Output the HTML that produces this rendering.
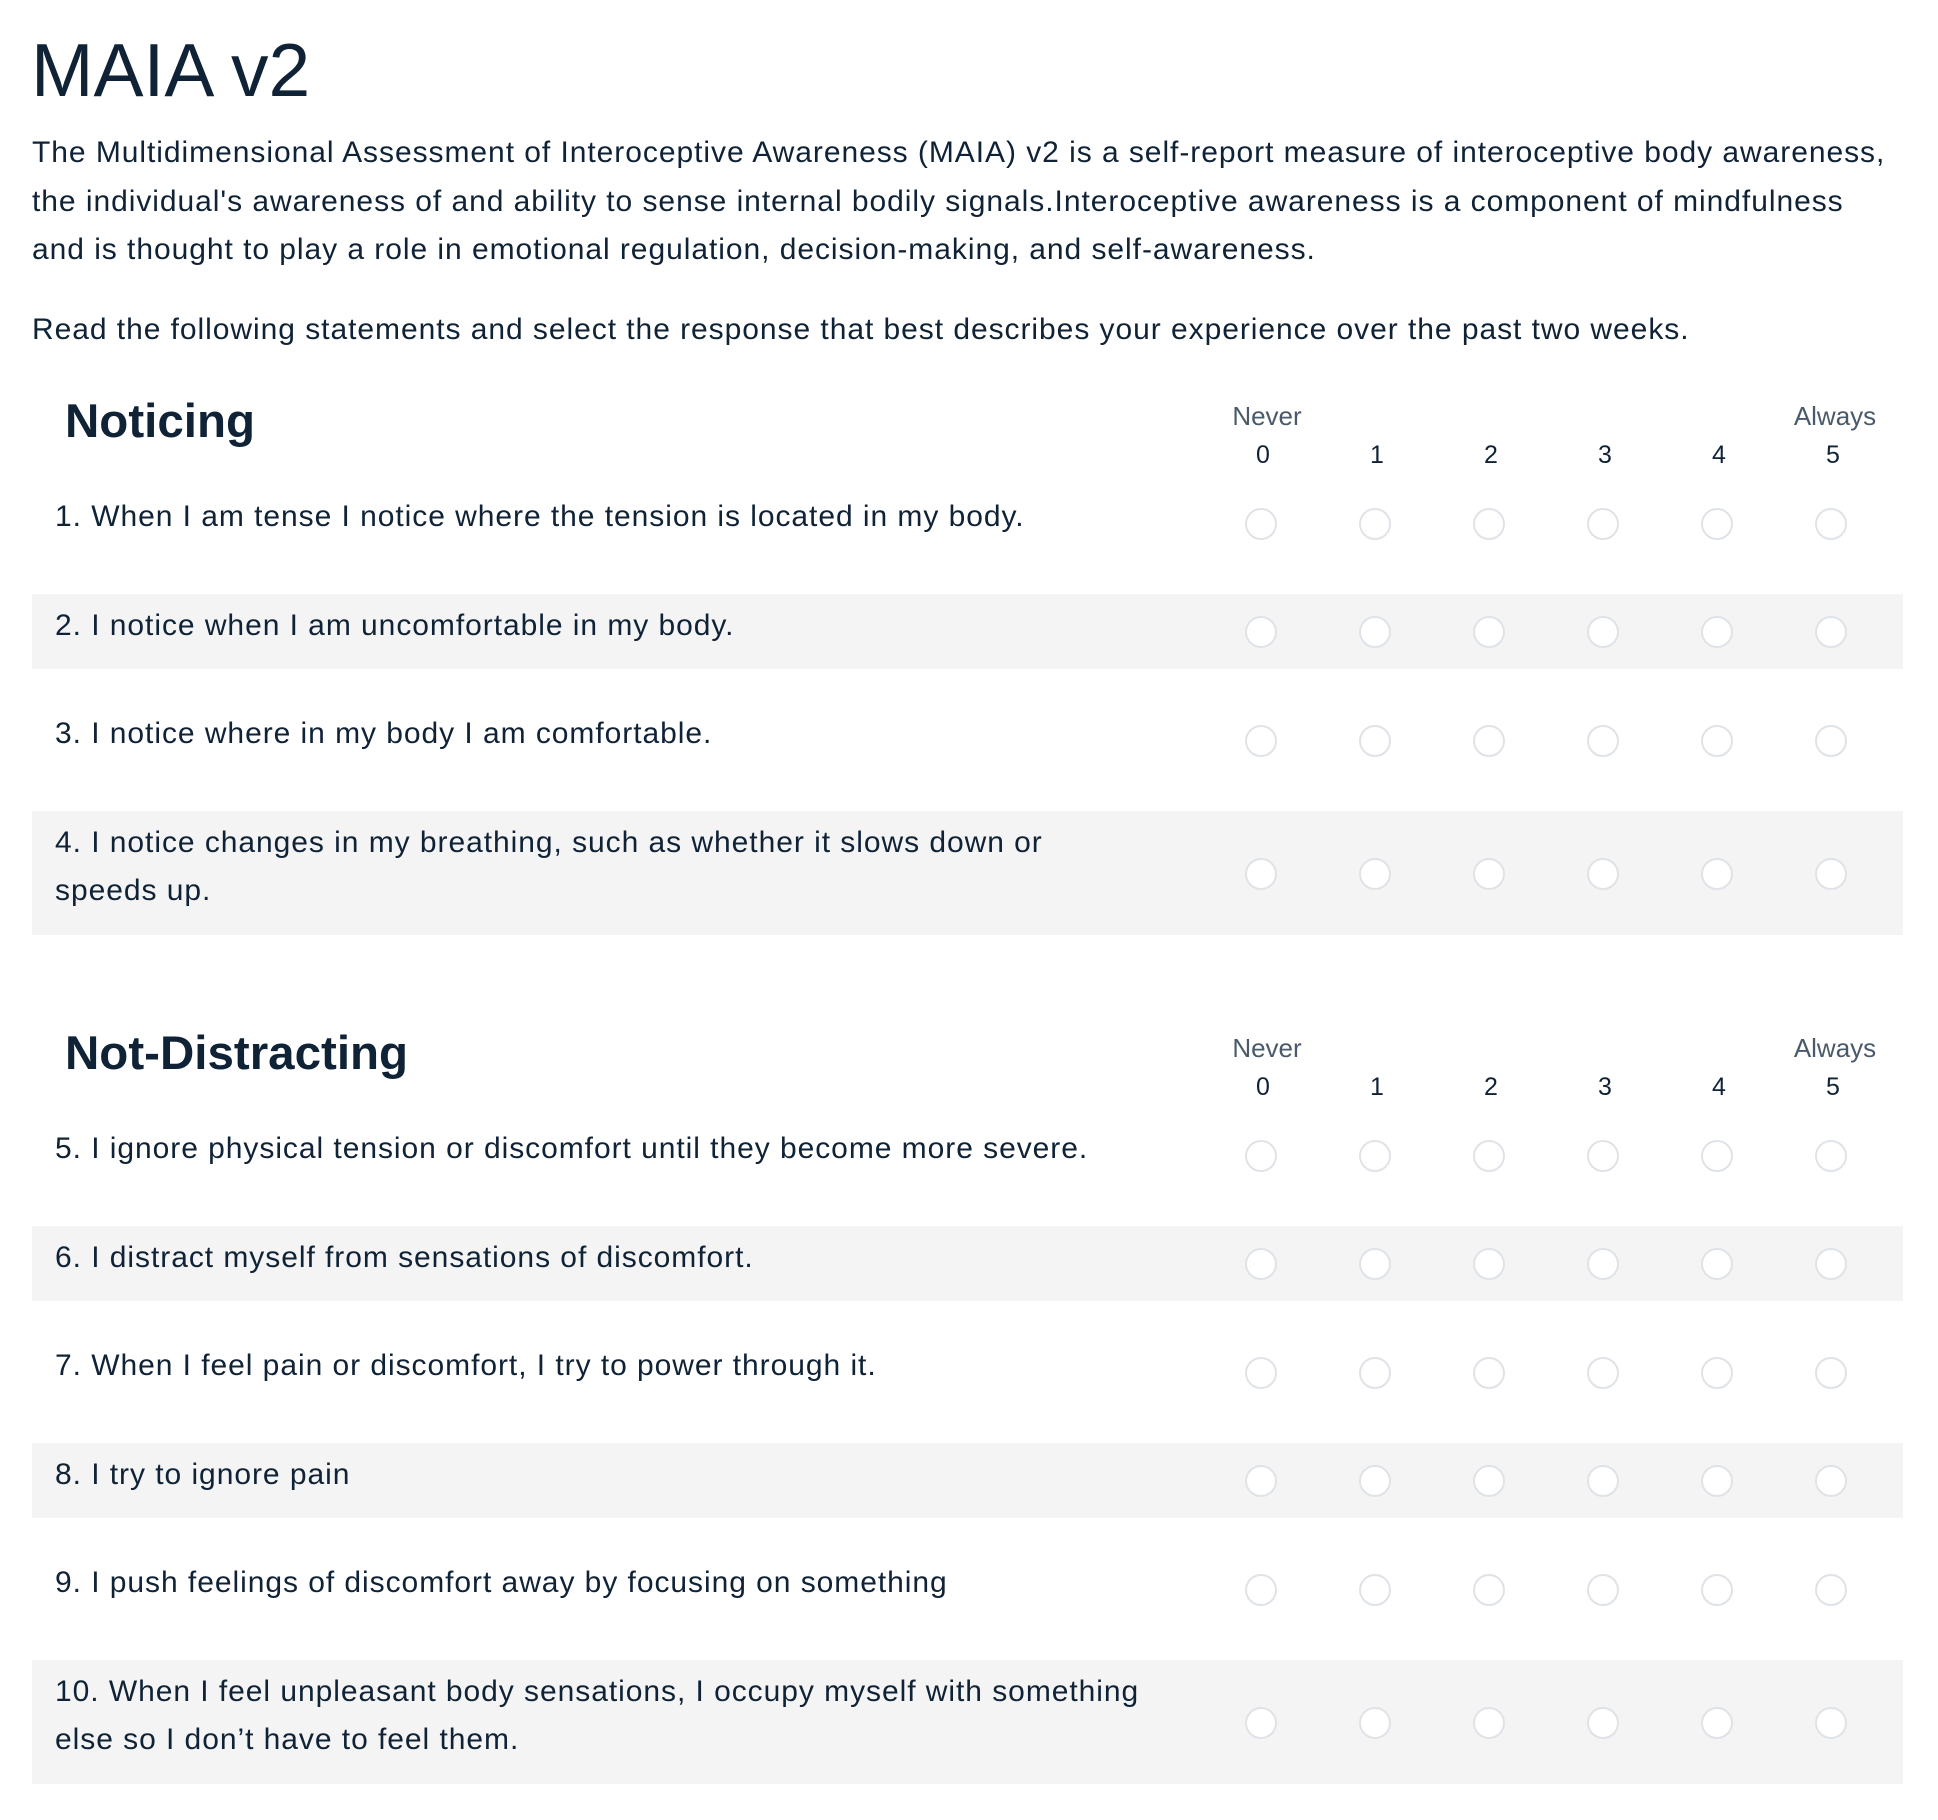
<!DOCTYPE html>
<html><head><meta charset="utf-8">
<style>
*{margin:0;padding:0;box-sizing:border-box}
html,body{width:1938px;height:1820px;background:#fff;overflow:hidden}
body{font-family:"Liberation Sans",Arial,Helvetica,sans-serif;color:#0f2236;position:relative}
h1{position:absolute;left:31px;top:33px;font-size:75px;font-weight:400;line-height:1;white-space:nowrap}
.p{position:absolute;left:32px;font-size:30px;letter-spacing:0.95px;line-height:48.5px;white-space:nowrap}
.sec{position:absolute;left:0;width:1938px}
.h2{position:absolute;left:65px;top:-87px;font-size:47.5px;font-weight:700;line-height:1;white-space:nowrap}
.lbl{position:absolute;font-size:26px;line-height:1;color:#4a5a6a;text-align:center;width:120px}
.num{position:absolute;top:-42px;font-size:25px;line-height:1;text-align:center;width:40px}
.row{position:relative;margin-left:32px;width:1871px;margin-bottom:33px;padding:8px 0 19px 23px;font-size:30px;letter-spacing:0.95px;line-height:48.5px;white-space:nowrap}
.row.g{background:#f4f4f4}
.r{position:absolute;top:50%;width:32px;height:32px;margin-top:-15px;border:2px solid #dfe3e8;border-radius:50%;background:#fff}
</style></head><body>
<h1>MAIA v2</h1>
<div class="p" style="top:129px">The Multidimensional Assessment of Interoceptive Awareness (MAIA) v2 is a self-report measure of interoceptive body awareness,<br>the individual's awareness of and ability to sense internal bodily signals.Interoceptive awareness is a component of mindfulness<br>and is thought to play a role in emotional regulation, decision-making, and self-awareness.</div>
<div class="p" style="top:306px">Read the following statements and select the response that best describes your experience over the past two weeks.</div>

<div class="sec" style="top:485px">
<div class="h2">Noticing</div>
<div class="lbl" style="left:1207px;top:-82px">Never</div>
<div class="lbl" style="left:1775px;top:-82px">Always</div>
<div class="num" style="left:1243px">0</div><div class="num" style="left:1357px">1</div><div class="num" style="left:1471px">2</div><div class="num" style="left:1585px">3</div><div class="num" style="left:1699px">4</div><div class="num" style="left:1813px">5</div>
<div class="row">1. When I am tense I notice where the tension is located in my body.<span class="r" style="left:1213px"></span><span class="r" style="left:1327px"></span><span class="r" style="left:1441px"></span><span class="r" style="left:1555px"></span><span class="r" style="left:1669px"></span><span class="r" style="left:1783px"></span></div>
<div class="row g">2. I notice when I am uncomfortable in my body.<span class="r" style="left:1213px"></span><span class="r" style="left:1327px"></span><span class="r" style="left:1441px"></span><span class="r" style="left:1555px"></span><span class="r" style="left:1669px"></span><span class="r" style="left:1783px"></span></div>
<div class="row">3. I notice where in my body I am comfortable.<span class="r" style="left:1213px"></span><span class="r" style="left:1327px"></span><span class="r" style="left:1441px"></span><span class="r" style="left:1555px"></span><span class="r" style="left:1669px"></span><span class="r" style="left:1783px"></span></div>
<div class="row g">4. I notice changes in my breathing, such as whether it slows down or<br>speeds up.<span class="r" style="left:1213px"></span><span class="r" style="left:1327px"></span><span class="r" style="left:1441px"></span><span class="r" style="left:1555px"></span><span class="r" style="left:1669px"></span><span class="r" style="left:1783px"></span></div>
</div>

<div class="sec" style="top:1117px">
<div class="h2">Not-Distracting</div>
<div class="lbl" style="left:1207px;top:-82px">Never</div>
<div class="lbl" style="left:1775px;top:-82px">Always</div>
<div class="num" style="left:1243px">0</div><div class="num" style="left:1357px">1</div><div class="num" style="left:1471px">2</div><div class="num" style="left:1585px">3</div><div class="num" style="left:1699px">4</div><div class="num" style="left:1813px">5</div>
<div class="row">5. I ignore physical tension or discomfort until they become more severe.<span class="r" style="left:1213px"></span><span class="r" style="left:1327px"></span><span class="r" style="left:1441px"></span><span class="r" style="left:1555px"></span><span class="r" style="left:1669px"></span><span class="r" style="left:1783px"></span></div>
<div class="row g">6. I distract myself from sensations of discomfort.<span class="r" style="left:1213px"></span><span class="r" style="left:1327px"></span><span class="r" style="left:1441px"></span><span class="r" style="left:1555px"></span><span class="r" style="left:1669px"></span><span class="r" style="left:1783px"></span></div>
<div class="row">7. When I feel pain or discomfort, I try to power through it.<span class="r" style="left:1213px"></span><span class="r" style="left:1327px"></span><span class="r" style="left:1441px"></span><span class="r" style="left:1555px"></span><span class="r" style="left:1669px"></span><span class="r" style="left:1783px"></span></div>
<div class="row g">8. I try to ignore pain<span class="r" style="left:1213px"></span><span class="r" style="left:1327px"></span><span class="r" style="left:1441px"></span><span class="r" style="left:1555px"></span><span class="r" style="left:1669px"></span><span class="r" style="left:1783px"></span></div>
<div class="row">9. I push feelings of discomfort away by focusing on something<span class="r" style="left:1213px"></span><span class="r" style="left:1327px"></span><span class="r" style="left:1441px"></span><span class="r" style="left:1555px"></span><span class="r" style="left:1669px"></span><span class="r" style="left:1783px"></span></div>
<div class="row g">10. When I feel unpleasant body sensations, I occupy myself with something<br>else so I don’t have to feel them.<span class="r" style="left:1213px"></span><span class="r" style="left:1327px"></span><span class="r" style="left:1441px"></span><span class="r" style="left:1555px"></span><span class="r" style="left:1669px"></span><span class="r" style="left:1783px"></span></div>
</div>
</body></html>
